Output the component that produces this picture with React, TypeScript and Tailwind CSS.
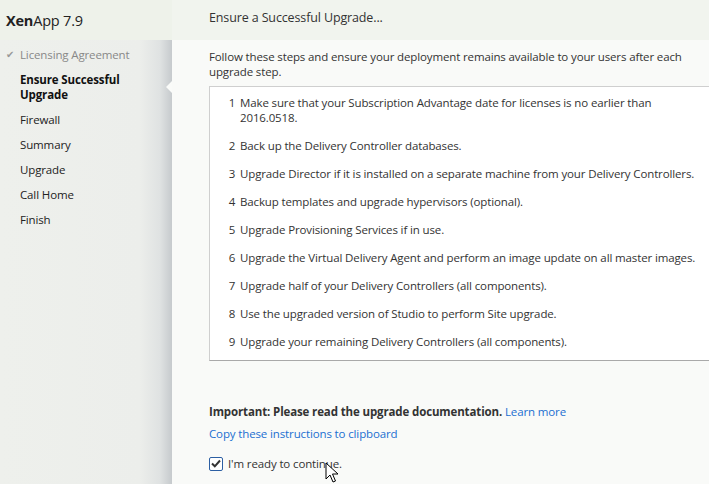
const steps = [
  "Make sure that your Subscription Advantage date for licenses is no earlier than\n2016.0518.",
  "Back up the Delivery Controller databases.",
  "Upgrade Director if it is installed on a separate machine from your Delivery Controllers.",
  "Backup templates and upgrade hypervisors (optional).",
  "Upgrade Provisioning Services if in use.",
  "Upgrade the Virtual Delivery Agent and perform an image update on all master images.",
  "Upgrade half of your Delivery Controllers (all components).",
  "Use the upgraded version of Studio to perform Site upgrade.",
  "Upgrade your remaining Delivery Controllers (all components).",
]

const navItems = ["Firewall", "Summary", "Upgrade", "Call Home", "Finish"]

export default function App() {
  return (
    <div className="relative flex h-[484px] w-[709px] overflow-hidden text-[11.5px] tracking-[-0.13px] text-[#333] [font-family:'Open_Sans',sans-serif]">

      {/* SIDEBAR */}
      <aside className="flex w-[172px] shrink-0 flex-col bg-[linear-gradient(to_right,#eef0ec_0px,#eceeeb_140px,#dfe2e2_160px,#c6cacd_172px)]">
        <div className="h-[40px] bg-[#eef2ea] pl-[6px] pt-[10px] text-[14.5px] tracking-[-0.2px] text-[#222]">
          <span className="font-bold">Xen</span>App 7.9
        </div>

        <div className="flex items-center pt-[7px] leading-[15px] text-[#888]">
          <span className="w-[20px] pl-[6px] text-[10px] text-[#999]">✔</span>
          <span>Licensing Agreement</span>
        </div>

        <div className="mt-[10px] pl-[20px] font-bold leading-[15px] text-[#111]">
          Ensure Successful<br />Upgrade
        </div>

        <div className="mt-[10px] flex flex-col gap-[10px] pl-[20px] leading-[15px] text-[#222]">
          {navItems.map((n) => (
            <div key={n}>{n}</div>
          ))}
        </div>
      </aside>

      {/* NOTCH */}
      <div className="absolute left-[166px] top-[81px] h-0 w-0 border-y-[6px] border-r-[6px] border-y-transparent border-r-[#fafbf9]" />

      {/* MAIN */}
      <main className="flex min-w-0 flex-1 flex-col bg-[#f9faf8]">
        <div className="h-[40px] bg-[#f1f4ee] pl-[37px] pt-[9px] text-[12.5px] text-[#333]">
          Ensure a Successful Upgrade...
        </div>

        <div className="pl-[37px]">
          <p className="mt-[9px] pr-[20px] leading-[15px]">
            Follow these steps and ensure your deployment remains available to your users after each upgrade step.
          </p>

          <div className="mt-[7px] h-[275px] overflow-hidden border border-r-0 border-[#cfcfcf] border-b-[#a9a9a9] bg-white pl-[14px] pt-[8px]">
            <ol className="flex flex-col gap-[13px]">
              {steps.map((s, i) => (
                <li key={i} className="flex leading-[15px]">
                  <span className="w-[16px] shrink-0 text-center">{i + 1}</span>
                  <span className="whitespace-pre">{s}</span>
                </li>
              ))}
            </ol>
          </div>

          <p className="mt-[43px] leading-[15px]">
            <span className="font-bold">Important: Please read the upgrade documentation.</span>{" "}
            <span className="text-[#1b6fd1]">Learn more</span>
          </p>
          <p className="mt-[7px] leading-[15px] text-[#1b6fd1]">Copy these instructions to clipboard</p>

          <label className="mt-[14px] flex items-center gap-[5px]">
            <span className="flex h-[14px] w-[14px] items-center justify-center rounded-[2px] border border-[#2c5fa3] bg-white">
              <svg width="10" height="9" viewBox="0 0 10 9">
                <path d="M1 4.5 L3.8 7.3 L9 1.5" fill="none" stroke="#333" strokeWidth="2" />
              </svg>
            </span>
            <span>I'm ready to continue.</span>
          </label>
        </div>
      </main>

      {/* CURSOR */}
      <svg className="absolute left-[325px] top-[462px]" width="14" height="22" viewBox="0 0 14 22">
        <path d="M1 1 L1 17 L5 13 L8 20 L10.5 19 L7.5 12 L13 12 Z" fill="#fff" stroke="#000" strokeWidth="1" strokeLinejoin="round" />
      </svg>
    </div>
  )
}
